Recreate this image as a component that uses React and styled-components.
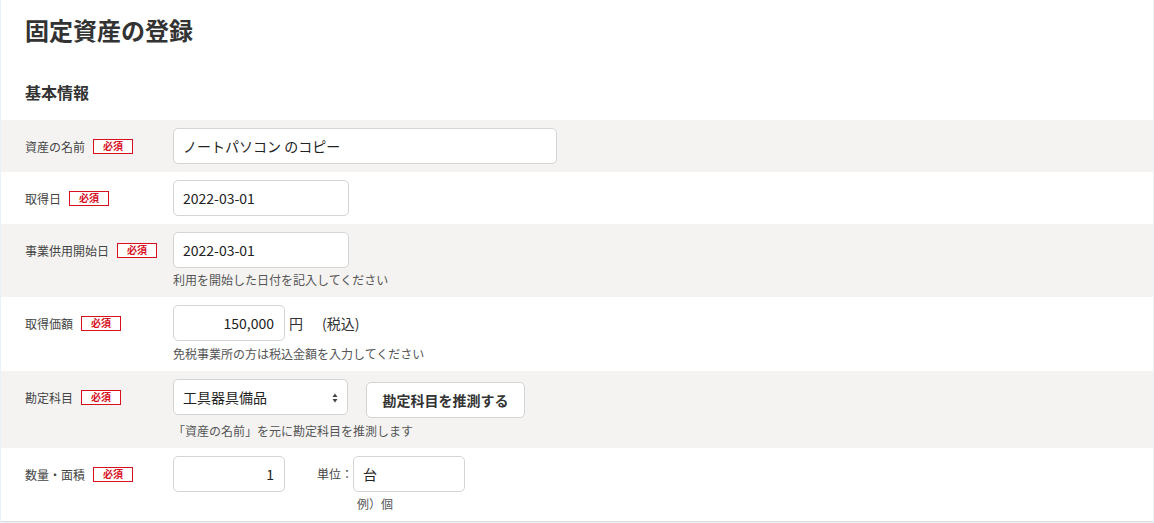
import React from 'react';
import styled, {createGlobalStyle} from 'styled-components';

const GlobalStyle = createGlobalStyle`
  html, body {
    margin: 0;
    padding: 0;
    background: #eaf2f9;
  }
  body {
    font-family: "Noto Sans CJK JP", "Noto Sans", sans-serif;
    color: #333;
  }
`;

const Panel = styled.div`
  margin: 0 1px;
  background: #fff;
  border-bottom: 1px solid #dcdcdc;
  padding-top: 12px;
  height: 509px;
`;

const Title = styled.h1`
  margin: 0 24px;
  font-size: 24px;
  line-height: 36px;
  font-weight: 700;
  color: #333;
`;

const Heading = styled.h2`
  margin: 32px 24px 16px;
  font-size: 16px;
  line-height: 24px;
  font-weight: 700;
  color: #333;
`;

const Row = styled.div`
  display: flex;
  padding: 8px 24px;
  background: ${({shaded}) => (shaded ? '#f4f3f2' : '#fff')};
`;

const LabelCell = styled.div`
  width: 148px;
  height: 36px;
  flex-shrink: 0;
  display: flex;
  align-items: center;
  font-size: 12px;
  color: #444;
`;

const Required = styled.span`
  display: inline-flex;
  align-items: center;
  justify-content: center;
  width: 38px;
  height: 13px;
  margin-left: 8px;
  border: 1px solid #d7101e;
  background: #fff;
  color: #d7101e;
  font-size: 10px;
  font-weight: 700;
  line-height: 1;
`;

const Field = styled.div`
  display: flex;
  flex-direction: column;
`;

const Line = styled.div`
  display: flex;
  align-items: ${({top}) => (top ? 'flex-start' : 'center')};
`;

const Input = styled.input`
  box-sizing: border-box;
  width: ${({w}) => w}px;
  height: 36px;
  padding: 0 10px 0 9px;
  border: 1px solid #d4d4d4;
  border-radius: 5px;
  background: #fff;
  font-family: "Noto Sans CJK JP", "Noto Sans", sans-serif;
  font-size: 14px;
  color: #222;
  text-align: ${({right}) => (right ? 'right' : 'left')};
  outline: none;
`;

const SelectBox = styled.div`
  box-sizing: border-box;
  position: relative;
  width: 175px;
  height: 36px;
  padding: 0 9px;
  display: flex;
  align-items: center;
  border: 1px solid #d4d4d4;
  border-radius: 5px;
  background: #fff;
  font-size: 14px;
  color: #222;
`;

const Arrows = styled.svg`
  position: absolute;
  right: 9px;
  top: 13px;
`;

const Button = styled.button`
  box-sizing: border-box;
  margin: 3px 0 0 18px;
  width: 159px;
  height: 36px;
  border: 1px solid #d4d4d4;
  border-radius: 5px;
  background: #fff;
  font-family: "Noto Sans CJK JP", "Noto Sans", sans-serif;
  font-size: 14px;
  font-weight: 700;
  color: #333;
`;

const Unit = styled.span`
  font-size: 14px;
  color: #333;
  margin-left: ${({gap}) => gap}px;
`;

const Help = styled.div`
  margin-top: ${({space}) => space || 3}px;
  margin-left: ${({indent}) => indent || 0}px;
  font-size: 12px;
  line-height: 18px;
  color: #555;
`;

const UnitLabel = styled.span`
  font-size: 12px;
  color: #444;
  margin-left: 32px;
  line-height: 36px;
`;

const UnitField = styled.div`
  display: flex;
  flex-direction: column;
`;

const Label = ({children}) => (
  <LabelCell>
    {children}
    <Required>必須</Required>
  </LabelCell>
);

const App = () => {
  return (
    <>
      <GlobalStyle/>
      <Panel>
        <Title>固定資産の登録</Title>
        <Heading>基本情報</Heading>

        <Row shaded>
          <Label>資産の名前</Label>
          <Input w={384} defaultValue="ノートパソコン のコピー"/>
        </Row>

        <Row>
          <Label>取得日</Label>
          <Input w={176} defaultValue="2022-03-01"/>
        </Row>

        <Row shaded>
          <Label>事業供用開始日</Label>
          <Field>
            <Input w={176} defaultValue="2022-03-01"/>
            <Help>利用を開始した日付を記入してください</Help>
          </Field>
        </Row>

        <Row>
          <Label>取得価額</Label>
          <Field>
            <Line>
              <Input w={112} right defaultValue="150,000"/>
              <Unit gap={4}>円</Unit>
              <Unit gap={19}>(税込)</Unit>
            </Line>
            <Help space={4}>免税事業所の方は税込金額を入力してください</Help>
          </Field>
        </Row>

        <Row shaded>
          <Label>勘定科目</Label>
          <Field>
            <Line top>
              <SelectBox>
                工具器具備品
                <Arrows width="6" height="10" viewBox="0 0 6 10">
                  <path d="M3 0.5 L5.5 4 L0.5 4 Z" fill="#444"/>
                  <path d="M3 9.5 L5.5 6 L0.5 6 Z" fill="#444"/>
                </Arrows>
              </SelectBox>
              <Button>勘定科目を推測する</Button>
            </Line>
            <Help space={4}>「資産の名前」を元に勘定科目を推測します</Help>
          </Field>
        </Row>

        <Row>
          <Label>数量・面積</Label>
          <Line top>
            <Input w={112} right defaultValue="1"/>
            <UnitLabel>単位：</UnitLabel>
            <UnitField>
              <Input w={112} defaultValue="台"/>
              <Help indent={4}>例）個</Help>
            </UnitField>
          </Line>
        </Row>
      </Panel>
    </>
  );
};

export default App;
